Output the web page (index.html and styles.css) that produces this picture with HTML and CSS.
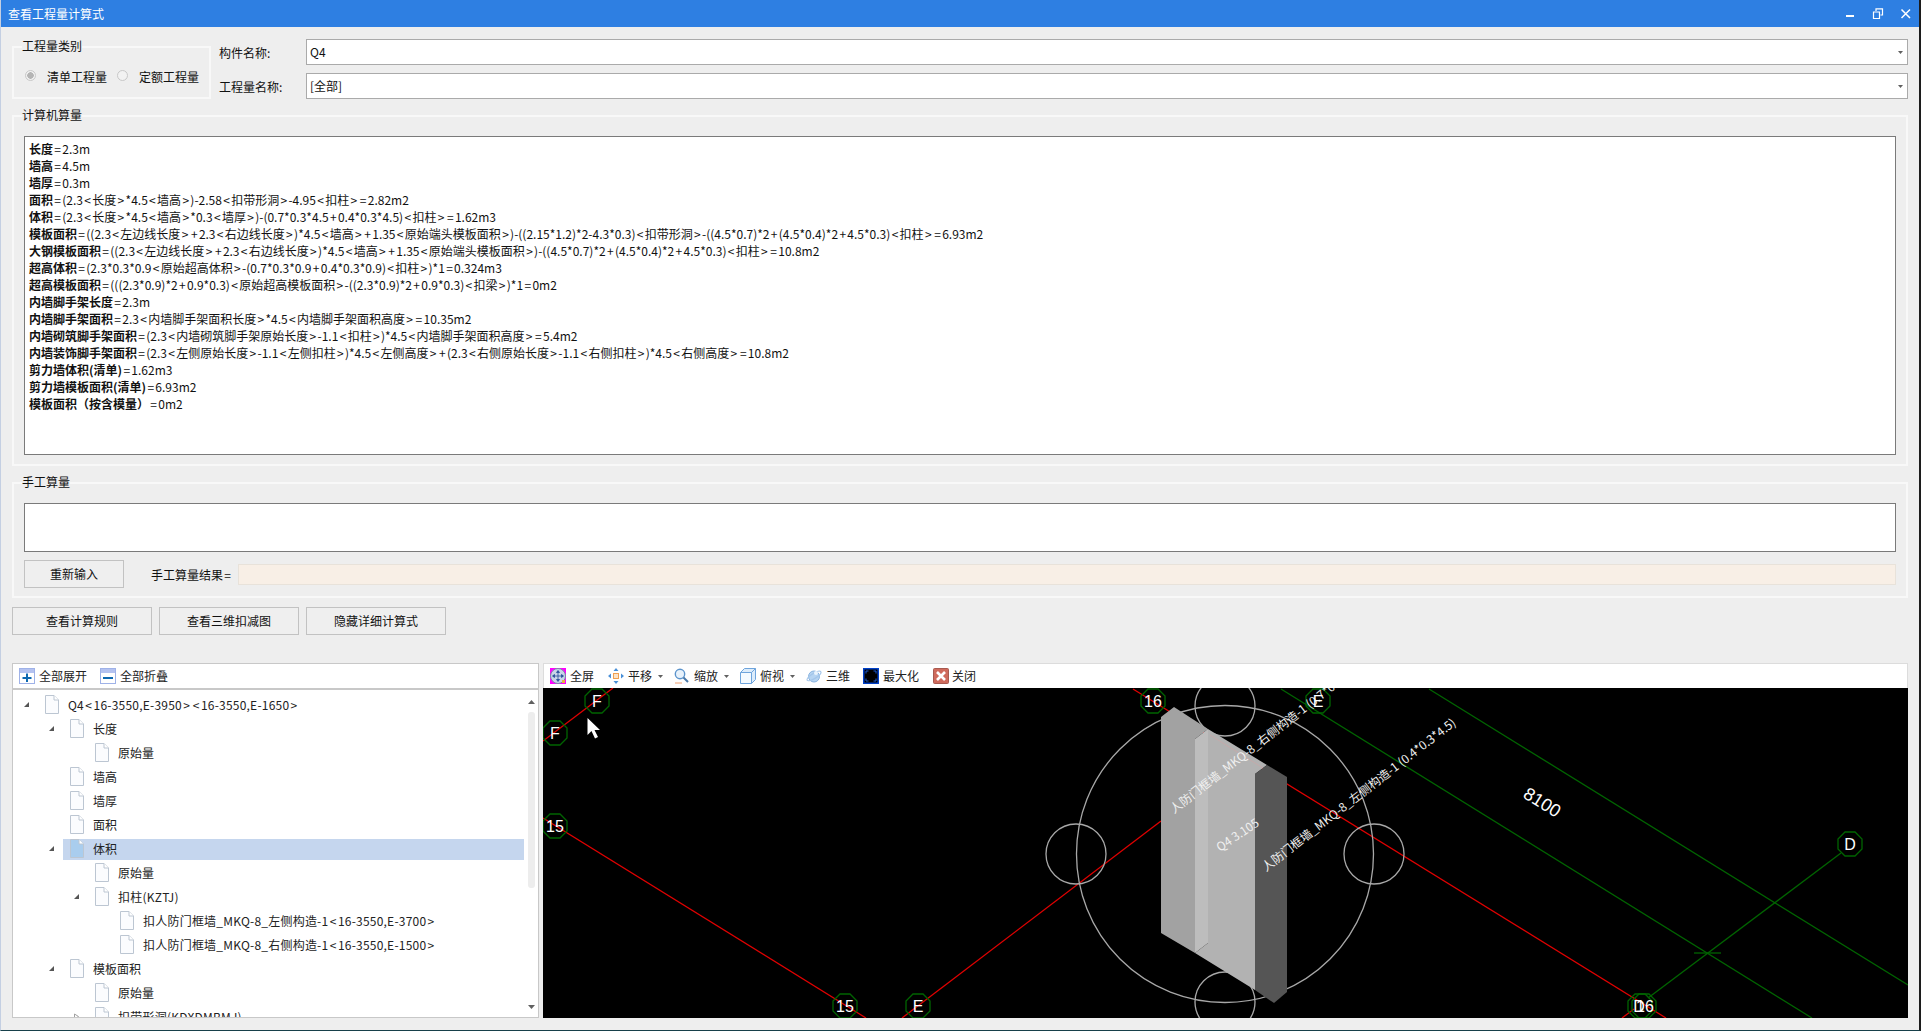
FILE: index.html
```html
<!DOCTYPE html>
<html lang="zh-CN">
<head>
<meta charset="utf-8">
<title>查看工程量计算式</title>
<link rel="stylesheet" href="styles.css">
</head>
<body>
<svg class="defs" aria-hidden="true">
  <symbol id="page" viewBox="0 0 14 19">
    <path d="M.5.5H9L13.5 5V18.5H.5Z" fill="currentColor" stroke="#bcc6d2"/>
    <path d="M9 .5V5H13.5" fill="#fff" stroke="#bcc6d2"/>
  </symbol>
  <symbol id="open" viewBox="0 0 7 7"><path d="M6 1V6H1Z" fill="#555"/></symbol>
  <symbol id="shut" viewBox="0 0 7 7"><path d="M1.5 1V6L5.5 3.5Z" fill="#fff" stroke="#a0a0a0"/></symbol>
  <symbol id="drop" viewBox="0 0 7 4"><path d="M0 0H7L3.500 4Z" fill="#606060"/></symbol>
</svg>
<div class="window">
  <header class="titlebar">
    <span class="title">查看工程量计算式</span>
    <div class="winbtns">
      <svg class="winbtn" viewBox="0 0 12 12"><path d="M2 8H10" stroke="#fff" stroke-width="2"/></svg>
      <svg class="winbtn" viewBox="0 0 12 12"><path d="M4 3V.8H10.500V7H8.500M1.500 4H7.500V10.500H1.500Z" fill="none" stroke="#fff" stroke-width="1.200"/></svg>
      <svg class="winbtn" viewBox="0 0 12 12"><path d="M1.500 1.500L10 10M10 1.500L1.500 10" stroke="#fff" stroke-width="1.500"/></svg>
    </div>
  </header>
  <main class="main">
    <section class="top-row">
      <fieldset class="group type-group">
        <legend>工程量类别</legend>
        <div class="radios">
          <span class="radio checked"></span><span class="radio-label">清单工程量</span>
          <span class="radio"></span><span class="radio-label">定额工程量</span>
        </div>
      </fieldset>
      <div class="fields">
        <div class="field"><label>构件名称:</label><div class="combo">Q4<svg class="combo-arrow"><use href="#drop"/></svg></div></div>
        <div class="field"><label>工程量名称:</label><div class="combo">[全部]<svg class="combo-arrow"><use href="#drop"/></svg></div></div>
      </div>
    </section>

    <fieldset class="group auto-group">
      <legend>计算机算量</legend>
      <div class="memo memo-auto">
        <p><b>长度</b><i>=</i>2.3m</p>
        <p><b>墙高</b><i>=</i>4.5m</p>
        <p><b>墙厚</b><i>=</i>0.3m</p>
        <p><b>面积</b><i>=</i>(2.3<i>&lt;</i>长度<i>&gt;</i>*4.5<i>&lt;</i>墙高<i>&gt;</i>)-2.58<i>&lt;</i>扣带形洞<i>&gt;</i>-4.95<i>&lt;</i>扣柱<i>&gt;</i><i>=</i>2.82m2</p>
        <p><b>体积</b><i>=</i>(2.3<i>&lt;</i>长度<i>&gt;</i>*4.5<i>&lt;</i>墙高<i>&gt;</i>*0.3<i>&lt;</i>墙厚<i>&gt;</i>)-(0.7*0.3*4.5<i>+</i>0.4*0.3*4.5)<i>&lt;</i>扣柱<i>&gt;</i><i>=</i>1.62m3</p>
        <p><b>模板面积</b><i>=</i>((2.3<i>&lt;</i>左边线长度<i>&gt;</i><i>+</i>2.3<i>&lt;</i>右边线长度<i>&gt;</i>)*4.5<i>&lt;</i>墙高<i>&gt;</i><i>+</i>1.35<i>&lt;</i>原始端头模板面积<i>&gt;</i>)-((2.15*1.2)*2-4.3*0.3)<i>&lt;</i>扣带形洞<i>&gt;</i>-((4.5*0.7)*2<i>+</i>(4.5*0.4)*2<i>+</i>4.5*0.3)<i>&lt;</i>扣柱<i>&gt;</i><i>=</i>6.93m2</p>
        <p><b>大钢模板面积</b><i>=</i>((2.3<i>&lt;</i>左边线长度<i>&gt;</i><i>+</i>2.3<i>&lt;</i>右边线长度<i>&gt;</i>)*4.5<i>&lt;</i>墙高<i>&gt;</i><i>+</i>1.35<i>&lt;</i>原始端头模板面积<i>&gt;</i>)-((4.5*0.7)*2<i>+</i>(4.5*0.4)*2<i>+</i>4.5*0.3)<i>&lt;</i>扣柱<i>&gt;</i><i>=</i>10.8m2</p>
        <p><b>超高体积</b><i>=</i>(2.3*0.3*0.9<i>&lt;</i>原始超高体积<i>&gt;</i>-(0.7*0.3*0.9<i>+</i>0.4*0.3*0.9)<i>&lt;</i>扣柱<i>&gt;</i>)*1<i>=</i>0.324m3</p>
        <p><b>超高模板面积</b><i>=</i>(((2.3*0.9)*2<i>+</i>0.9*0.3)<i>&lt;</i>原始超高模板面积<i>&gt;</i>-((2.3*0.9)*2<i>+</i>0.9*0.3)<i>&lt;</i>扣梁<i>&gt;</i>)*1<i>=</i>0m2</p>
        <p><b>内墙脚手架长度</b><i>=</i>2.3m</p>
        <p><b>内墙脚手架面积</b><i>=</i>2.3<i>&lt;</i>内墙脚手架面积长度<i>&gt;</i>*4.5<i>&lt;</i>内墙脚手架面积高度<i>&gt;</i><i>=</i>10.35m2</p>
        <p><b>内墙砌筑脚手架面积</b><i>=</i>(2.3<i>&lt;</i>内墙砌筑脚手架原始长度<i>&gt;</i>-1.1<i>&lt;</i>扣柱<i>&gt;</i>)*4.5<i>&lt;</i>内墙脚手架面积高度<i>&gt;</i><i>=</i>5.4m2</p>
        <p><b>内墙装饰脚手架面积</b><i>=</i>(2.3<i>&lt;</i>左侧原始长度<i>&gt;</i>-1.1<i>&lt;</i>左侧扣柱<i>&gt;</i>)*4.5<i>&lt;</i>左侧高度<i>&gt;</i><i>+</i>(2.3<i>&lt;</i>右侧原始长度<i>&gt;</i>-1.1<i>&lt;</i>右侧扣柱<i>&gt;</i>)*4.5<i>&lt;</i>右侧高度<i>&gt;</i><i>=</i>10.8m2</p>
        <p><b>剪力墙体积(清单)</b><i>=</i>1.62m3</p>
        <p><b>剪力墙模板面积(清单)</b><i>=</i>6.93m2</p>
        <p><b>模板面积（按含模量）</b><i>=</i>0m2</p>
      </div>
    </fieldset>

    <fieldset class="group hand-group">
      <legend>手工算量</legend>
      <div class="memo memo-hand"></div>
      <div class="hand-row">
        <button class="btn btn-reset">重新输入</button>
        <span class="hand-label">手工算量结果<i>=</i></span>
        <div class="hand-result"></div>
      </div>
    </fieldset>

    <div class="actions">
      <button class="btn btn-action">查看计算规则</button>
      <button class="btn btn-action">查看三维扣减图</button>
      <button class="btn btn-action">隐藏详细计算式</button>
    </div>

    <div class="panels">
      <section class="panel tree-panel">
        <div class="toolbar">
          <span class="tool tool-tree">
            <svg class="ico" viewBox="0 0 16 16"><rect x=".5" y=".5" width="15" height="15" fill="#fff" stroke="#9fb2e8"/><rect x="1" y="1" width="14" height="4" fill="#b4c2f0"/><path d="M8 5.500V14M3.500 10H12.500" stroke="#0c68b0" stroke-width="2"/></svg><span class="tool-text">全部展开</span>
          </span>
          <span class="tool tool-tree">
            <svg class="ico" viewBox="0 0 16 16"><rect x=".5" y=".5" width="15" height="15" fill="#fff" stroke="#9fb2e8"/><rect x="1" y="1" width="14" height="4" fill="#b4c2f0"/><path d="M3 10H13" stroke="#0c68b0" stroke-width="2"/></svg><span class="tool-text">全部折叠</span>
          </span>
        </div>
        <div class="tree-body">
          <div class="tree">
            <div class="row l0"><svg class="tw"><use href="#open"/></svg><div class="node"><svg class="page"><use href="#page"/></svg><span class="long">Q4<i>&lt;</i>16-3550,E-3950<i>&gt;</i><i>&lt;</i>16-3550,E-1650<i>&gt;</i></span></div></div>
            <div class="row l1"><svg class="tw"><use href="#open"/></svg><div class="node"><svg class="page"><use href="#page"/></svg>长度</div></div>
            <div class="row l2"><span class="tw"></span><div class="node"><svg class="page"><use href="#page"/></svg>原始量</div></div>
            <div class="row l1"><span class="tw"></span><div class="node"><svg class="page"><use href="#page"/></svg>墙高</div></div>
            <div class="row l1"><span class="tw"></span><div class="node"><svg class="page"><use href="#page"/></svg>墙厚</div></div>
            <div class="row l1"><span class="tw"></span><div class="node"><svg class="page"><use href="#page"/></svg>面积</div></div>
            <div class="row l1"><svg class="tw"><use href="#open"/></svg><div class="node selected"><svg class="page"><use href="#page"/></svg>体积</div></div>
            <div class="row l2"><span class="tw"></span><div class="node"><svg class="page"><use href="#page"/></svg>原始量</div></div>
            <div class="row l2"><svg class="tw"><use href="#open"/></svg><div class="node"><svg class="page"><use href="#page"/></svg><span class="long">扣柱(KZTJ)</span></div></div>
            <div class="row l3"><span class="tw"></span><div class="node"><svg class="page"><use href="#page"/></svg><span class="long">扣人防门框墙_MKQ-8_左侧构造-1<i>&lt;</i>16-3550,E-3700<i>&gt;</i></span></div></div>
            <div class="row l3"><span class="tw"></span><div class="node"><svg class="page"><use href="#page"/></svg><span class="long">扣人防门框墙_MKQ-8_右侧构造-1<i>&lt;</i>16-3550,E-1500<i>&gt;</i></span></div></div>
            <div class="row l1"><svg class="tw"><use href="#open"/></svg><div class="node"><svg class="page"><use href="#page"/></svg>模板面积</div></div>
            <div class="row l2"><span class="tw"></span><div class="node"><svg class="page"><use href="#page"/></svg>原始量</div></div>
            <div class="row l2"><svg class="tw"><use href="#shut"/></svg><div class="node"><svg class="page"><use href="#page"/></svg><span class="long">扣带形洞(KDXDMBMJ)</span></div></div>
          </div>
          <div class="scrollbar">
            <svg class="sb-arrow" viewBox="0 0 7 4"><path d="M0 4H7L3.500 0Z" fill="#606060"/></svg>
            <div class="sb-track"><div class="sb-thumb"></div></div>
            <svg class="sb-arrow" viewBox="0 0 7 4"><use href="#drop"/></svg>
          </div>
        </div>
      </section>

      <section class="panel view-panel">
        <div class="toolbar view-toolbar">
          <span class="vtool">
            <svg class="ico" viewBox="0 0 16 16"><rect width="16" height="16" fill="#f0f"/><circle cx="8" cy="8" r="7.500" fill="#c8d4e8" stroke="#7b8aa8"/><path d="M8 3V13M3 8H13M8 2.500L6.500 4.500H9.500ZM8 13.500L6.500 11.500H9.500ZM2.500 8L4.500 6.500V9.500ZM13.500 8L11.500 6.500V9.500Z" fill="#2a4f9c" stroke="#2a4f9c" stroke-width=".8"/><rect x="12" y="12" width="3" height="3" fill="#e8b040"/></svg><span class="tool-text">全屏</span>
          </span>
          <span class="vtool has-menu">
            <svg class="ico" viewBox="0 0 16 16"><rect x="5.500" y="5.500" width="5" height="5" fill="#fbe3c8" stroke="#f0a050"/><path d="M8 0L5.500 3H10.500ZM8 16L5.500 13H10.500ZM0 8L3 5.500V10.500ZM16 8L13 5.500V10.500Z" fill="#4a90d8"/></svg><span class="tool-text">平移</span><svg class="menu-arrow"><use href="#drop"/></svg>
          </span>
          <span class="vtool has-menu">
            <svg class="ico" viewBox="0 0 16 16"><circle cx="6" cy="6" r="4.700" fill="#e8f2fb" stroke="#5c94cc" stroke-width="1.400"/><path d="M9.500 9.500L14 14" stroke="#4a78a8" stroke-width="2"/><path d="M1 15H8" stroke="#f0a070"/></svg><span class="tool-text">缩放</span><svg class="menu-arrow"><use href="#drop"/></svg>
          </span>
          <span class="vtool has-menu">
            <svg class="ico" viewBox="0 0 16 16"><path d="M.5 4.500L4.500 .5H15.500V11.500L11.500 15.500H.5Z" fill="#dcecfb" stroke="#6ea4dc"/><rect x="1" y="5" width="10" height="10" fill="#f4faff"/><path d="M.5 4.500H11.500V15.500M11.500 4.500L15.500 .5" fill="none" stroke="#6ea4dc"/></svg><span class="tool-text">俯视</span><svg class="menu-arrow"><use href="#drop"/></svg>
          </span>
          <span class="vtool">
            <svg class="ico" viewBox="0 0 16 16"><circle cx="8" cy="8.500" r="5.500" fill="#b6d4f2" stroke="#8ab4e0"/><ellipse cx="8" cy="8" rx="8" ry="2.500" transform="rotate(-32 8 8)" fill="none" stroke="#a4c6ea" stroke-width="1.200"/><circle cx="10" cy="5" r="2" fill="#eaf4fd"/></svg><span class="tool-text">三维</span>
          </span>
          <span class="vtool">
            <svg class="ico" viewBox="0 0 16 16"><rect width="16" height="16" fill="#0040c8"/><rect x="1.500" y="1.500" width="13" height="13" fill="#000"/><path d="M3 5.500V3H5.500M10.500 3H13V5.500M13 10.500V13H10.500M5.500 13H3V10.500" fill="none" stroke="#1c5cd8"/></svg><span class="tool-text">最大化</span>
          </span>
          <span class="vtool">
            <svg class="ico" viewBox="0 0 16 16"><rect x=".5" y=".5" width="15" height="15" rx="1" fill="#cf6a5c" stroke="#a85a50"/><path d="M4 4L12 12M12 4L4 12" stroke="#fff" stroke-width="2.600"/></svg><span class="tool-text">关闭</span>
          </span>
        </div>
        <div class="canvas">
          <svg class="scene" viewBox="543 688 1365 330">
            <g fill="none" stroke-width="1.300">
              <g stroke="#e00000">
                <path d="M543 741L613 688"/>
                <path d="M543 818L866 1018"/>
                <path d="M902 1018L1161 821"/>
                <path d="M1133 689L1666 1018"/>
                <path d="M1622 1018L1634 1009"/>
              </g>
              <g stroke="#006400">
                <path d="M1281 689L1812 1018"/>
                <path d="M1429 689L1908 985"/>
                <path d="M1648 998L1841 853"/>
                <path d="M1694 953H1721"/>
                <polygon points="609,696 609,706 602,713 592,713 585,706 585,696 592,689 602,689"/>
                <polygon points="567,728 567,738 560,745 550,745 543,738 543,728 550,721 560,721"/>
                <polygon points="567,821 567,831 560,838 550,838 543,831 543,821 550,814 560,814"/>
                <polygon points="1165,696 1165,706 1158,713 1148,713 1141,706 1141,696 1148,689 1158,689"/>
                <polygon points="1330,696 1330,706 1323,713 1313,713 1306,706 1306,696 1313,689 1323,689"/>
                <polygon points="857,1001 857,1011 850,1018 840,1018 833,1011 833,1001 840,994 850,994"/>
                <polygon points="930,1001 930,1011 923,1018 913,1018 906,1011 906,1001 913,994 923,994"/>
                <polygon points="1652,1001 1652,1011 1645,1018 1635,1018 1628,1011 1628,1001 1635,994 1645,994"/>
                <polygon points="1656,1001 1656,1011 1649,1018 1639,1018 1632,1011 1632,1001 1639,994 1649,994"/>
                <polygon points="1862,839 1862,849 1855,856 1845,856 1838,849 1838,839 1845,832 1855,832"/>
              </g>
              <g stroke="#a8a8a8">
                <circle cx="1225" cy="854" r="148.500"/>
                <circle cx="1076" cy="854" r="30"/>
                <circle cx="1374" cy="854" r="30"/>
                <circle cx="1225" cy="706" r="30"/>
                <circle cx="1225" cy="1002" r="30"/>
              </g>
            </g>
            <polygon class="f-left" points="1161,717 1174,707 1208,729 1195,739 1195,953 1161,933"/>
            <polygon class="f-mid" points="1208,729 1267,765 1255,774 1255,990 1195,953 1208,943"/>
            <polygon class="f-light" points="1195,739 1208,729 1208,943 1195,953"/>
            <path class="f-seam" d="M1210 735L1263 768"/>
            <polygon class="f-dark" points="1255,774 1267,765 1287,777 1287,992 1274,1003 1255,990"/>
            <g class="labels">
              <text transform="translate(1174 814) rotate(-37.700)">人防门框墙_MKQ-8_右侧构造-1 (0.7*0.3*4.5)</text>
              <text transform="translate(1266 872) rotate(-37.700)">人防门框墙_MKQ-8_左侧构造-1 (0.4*0.3*4.5)</text>
              <text transform="translate(1220 852) rotate(-34)">Q4 3.105</text>
            </g>
            <g class="axis">
              <text x="597" y="707">F</text>
              <text x="555" y="739">F</text>
              <text x="555" y="832">15</text>
              <text x="1153" y="707">16</text>
              <text x="1318" y="707">E</text>
              <text x="845" y="1012">15</text>
              <text x="918" y="1012">E</text>
              <text x="1639" y="1012">D</text>
              <text x="1645" y="1012">16</text>
              <text x="1850" y="850">D</text>
            </g>
            <text class="dim" transform="translate(1522 797) rotate(31.700)">8100</text>
            <path d="M587.500 718V735L591.500 731L595 738.500L598 737L594.500 730H600Z" fill="#fff"/>
          </svg>
        </div>
      </section>
    </div>
  </main>
</div>
</body>
</html>
```
FILE: styles.css
```css
* { box-sizing: border-box; }
html, body { margin: 0; padding: 0; }
body {
  width: 1921px;
  height: 1031px;
  overflow: hidden;
  font-family: "Noto Sans CJK SC", "Noto Sans", sans-serif;
  font-size: 12px;
  color: #111;
  background: #eee;
}
i { font-style: normal; padding: 0 1.3px; }
.defs { position: absolute; width: 0; height: 0; }
.window {
  width: 1921px;
  height: 1031px;
  display: flex;
  flex-direction: column;
  background: #eee;
  border-left: 1px solid #c4cfe2;
  border-right: 2px solid #1c1c1c;
  border-bottom: 1px solid #17404a;
  overflow: hidden;
}
.titlebar {
  height: 27px;
  flex: none;
  display: flex;
  align-items: center;
  justify-content: space-between;
  background: #2e7fe2;
  color: #fff;
  padding: 0 0 0 7px;
}
.winbtns { display: flex; gap: 16px; padding-right: 7px; }
.winbtn { width: 12px; height: 12px; }
.main { flex: 1; padding: 11px 11px 0 11px; display: flex; flex-direction: column; }

.group {
  margin: 0;
  min-width: 0;
  border: 2px solid #f8f8f8;
}
.group legend { padding: 0; margin-left: 8px; height: 18px; line-height: 16px; font-size: 12px; }
.top-row { display: flex; height: 61px; }
.type-group { width: 199px; height: 61px; padding: 0; flex: none; }
.radios { display: flex; align-items: center; height: 40px; padding-left: 11px; }
.radio { width: 11px; height: 11px; border-radius: 50%; border: 1px solid #c8c8c8; background: #f2f2f2; margin-top: -2px; }
.radio.checked { background: radial-gradient(circle, #b4b4b4 0 3px, #f0f0f0 3.500px); }
.radio-label { margin-left: 11px; margin-right: 10px; width: 60px; white-space: nowrap; }
.fields { flex: 1; margin-left: 8px; margin-top: 1px; display: flex; flex-direction: column; gap: 8px; }
.field { display: flex; align-items: center; height: 26px; }
.field label { width: 87px; flex: none; }
.combo {
  flex: 1;
  height: 26px;
  line-height: 24px;
  background: #fff;
  border: 1px solid #aaa;
  padding-left: 3px;
  display: flex;
  justify-content: space-between;
  align-items: center;
}
.combo-arrow { width: 5px; height: 3px; margin-right: 4px; }

.auto-group { margin-top: 8px; width: 1896px; height: 359px; padding: 0 10px 9px 10px; }
.hand-group { margin-top: 8px; width: 1896px; height: 124px; padding: 0 10px 0 10px; }
.auto-group legend, .hand-group legend { margin-left: -2px; }
.memo { background: #fff; border: 1px solid #7a7a7a; }
.memo-auto { height: 319px; margin-top: 11px; padding: 3px 4px; overflow: hidden; }
.memo-auto p { margin: 0; height: 17px; line-height: 17px; white-space: nowrap; }
.memo-hand { height: 49px; margin-top: 11px; }
.hand-row { display: flex; align-items: center; margin-top: 8px; }
.btn {
  font: inherit;
  color: inherit;
  background: #efefef;
  border: 1px solid #c2c2c2;
  padding: 0 0 2px;
}
.btn-reset { width: 100px; height: 28px; }
.hand-label { margin-left: 27px; width: 87px; flex: none; white-space: nowrap; }
.hand-result { flex: 1; height: 21px; background: #f8efe6; border: 1px solid #e8e2da; }
.actions { display: flex; gap: 7px; margin-top: 9px; }
.btn-action { width: 140px; height: 28px; }

.panels { display: flex; gap: 4px; margin-top: 28px; height: 355px; }
.panel { background: #fff; display: flex; flex-direction: column; border: 1px solid #c8c8c8; overflow: hidden; }
.tree-panel { width: 527px; flex: none; }
.view-panel { width: 1365px; flex: none; border: 0; }
.toolbar { height: 26px; flex: none; display: flex; align-items: center; border-bottom: 2px solid #c8c8c8; background: #fff; color: #222; }
.tool { display: flex; align-items: center; gap: 4px; white-space: nowrap; }
.tool-tree { width: 81px; padding-left: 6px; height: 24px; }
.tool-text { padding-bottom: 2px; }
.ico { width: 16px; height: 16px; flex: none; }
.tree-body { flex: 1; display: flex; min-height: 0; }
.tree { flex: 1; padding: 5px 0 0 7px; overflow: hidden; color: #222; }
.row { display: flex; align-items: center; height: 21px; margin-bottom: 3px; white-space: nowrap; }
.l1 { margin-left: 25px; }
.l2 { margin-left: 50px; }
.l3 { margin-left: 75px; }
.tw { width: 7px; height: 7px; flex: none; margin-right: 8px; margin-left: 3px; margin-top: -2px; }
.node { flex: 1; height: 21px; display: flex; align-items: center; padding: 0 0 2px 7px; gap: 9px; color: #222; }
.long { letter-spacing: 0.22px; }
.page { width: 14px; height: 19px; flex: none; color: #fbfcfe; }
.selected { background: #c5d6ee; }
.selected .page { color: #a9cdee; }
.scrollbar { width: 14px; flex: none; display: flex; flex-direction: column; align-items: center; background: #fff; }
.sb-arrow { width: 7px; height: 4px; flex: none; margin: 10px 0 8px; }
.sb-track { flex: 1; width: 7px; }
.sb-thumb { height: 176px; background: #ededed; border-radius: 3px; }
.scrollbar .sb-arrow:last-child { margin: 5px 0 8px; }

.view-toolbar { height: 25px; border: 1px solid #dcdcdc; border-bottom: 0; padding-left: 6px; }
.vtool { display: flex; align-items: center; gap: 4px; white-space: nowrap; margin-right: 14px; }
.vtool.has-menu { margin-right: 11px; }
.vtool:nth-child(5) { margin-right: 13px; }
.vtool:last-child { gap: 3px; }
.menu-arrow { width: 5px; height: 3px; margin-left: 2px; }
.canvas { flex: 1; background: #000; overflow: hidden; min-height: 0; }
.scene { display: block; width: 1365px; height: 330px; }
.f-left { fill: #a2a2a2; }
.f-mid { fill: #b2b2b2; }
.f-light { fill: #bdbdbd; }
.f-seam { fill: none; stroke: #c4aaaa; stroke-width: 1; }
.f-dark { fill: #555; }
.labels text { fill: #f0f0f0; font-size: 12px; }
.axis text { fill: #fff; font-size: 16px; text-anchor: middle; font-family: "Liberation Sans", sans-serif; }
.dim { fill: #fff; font-size: 18px; font-family: "Liberation Sans", sans-serif; }
```
